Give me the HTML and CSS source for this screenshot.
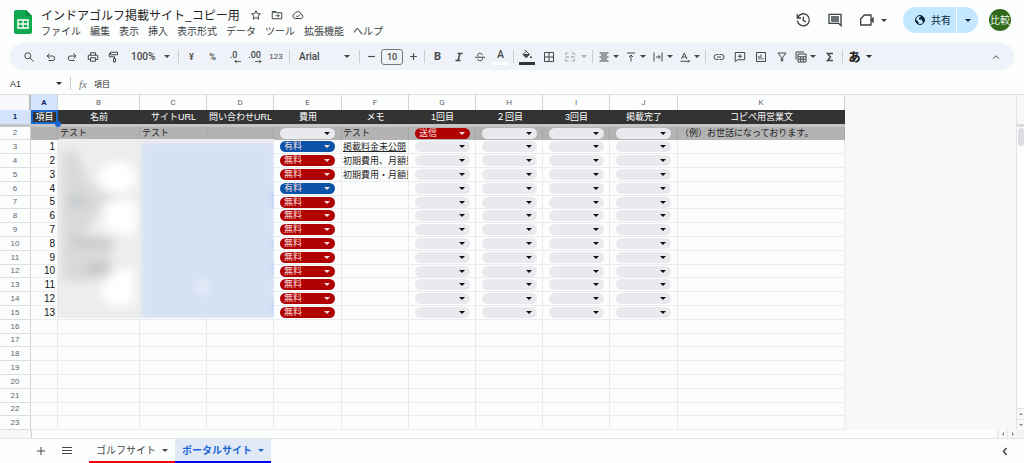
FILE: index.html
```
<!DOCTYPE html>
<html lang="ja">
<head>
<meta charset="utf-8">
<meta name="viewport" content="width=device-width, initial-scale=1">
<title>インドアゴルフ掲載サイト_コピー用</title>
<link rel="stylesheet" href="styles.css">
</head>
<body>
<header class="top">
  <svg class="logo" viewBox="0 0 18 24" aria-hidden="true">
    <path d="M2 0h10l6 6v16a2 2 0 0 1-2 2H2a2 2 0 0 1-2-2V2a2 2 0 0 1 2-2z" fill="#0fa94f"/>
    <path d="M12 0l6 6h-6z" fill="#0a8a40"/>
    <path d="M4 10h10v8H4zM4 14h10M9 10v8" fill="none" stroke="#fff" stroke-width="1.4"/>
  </svg>
  <div class="heading">
    <div class="title-row">
      <h1 class="title">インドアゴルフ掲載サイト_コピー用</h1>
      <button class="bare" aria-label="スター"><svg class="ic" viewBox="0 0 24 24"><path d="M12 3.5l2.6 5.7 6.2.7-4.6 4.2 1.3 6.1L12 17.100l-5.500 3.100 1.300-6.100-4.600-4.200 6.200-.7z" stroke-linejoin="round"/></svg></button>
      <button class="bare" aria-label="移動"><svg class="ic" viewBox="0 0 24 24"><path d="M2.500 5h7l2 2.500h10V19.500h-19zM3 6.500h8M9 13.500h7M13.500 10.500l3 3-3 3"/></svg></button>
      <button class="bare" aria-label="保存済み"><svg class="ic" viewBox="0 0 24 24"><path d="M6.500 19a5 5 0 0 1-.8-9.900 6.600 6.600 0 0 1 12.500 1.700A4.200 4.200 0 0 1 18.500 19zM8.500 13.500l2.500 2.500 4.500-4.500"/></svg></button>
    </div>
    <nav class="menus">
      <button>ファイル</button><button>編集</button><button>表示</button><button>挿入</button><button>表示形式</button><button>データ</button><button>ツール</button><button>拡張機能</button><button>ヘルプ</button>
    </nav>
  </div>
  <div class="actions">
    <button class="bare" aria-label="変更履歴"><svg class="ic big" viewBox="0 0 24 24"><path d="M4 8.500A9 9 0 1 1 3.500 13M3.500 3.500v5.500H9M12.500 7v5.500l4 2.500"/></svg></button>
    <button class="bare" aria-label="コメント"><svg class="ic big" viewBox="0 0 24 24"><path d="M3 3.500h18v17l-3.500-3.500H3zM6 7.500h12M6 10.500h12M6 13.500h12"/></svg></button>
    <button class="bare meet" aria-label="ビデオ会議"><svg class="ic big" viewBox="0 0 24 24"><path d="M8 4.500h10v15H2.500V10z" stroke-linejoin="round"/><path d="M18 11l4-4v10l-4-4z" fill="currentColor" stroke="none"/></svg><i class="tri"></i></button>
    <div class="share">
      <button class="share-main"><svg class="ic" viewBox="0 0 24 24"><circle cx="12" cy="12" r="9"/><path d="M3 10l6 6v5C5 20 2 15 3 10zM13 3v3l-3 2v3h5l2 4 2.500 2.500C23 12 21 5 13 3z" fill="currentColor" stroke="none"/></svg>共有</button>
      <button class="share-more" aria-label="共有オプション"><i class="tri"></i></button>
    </div>
    <button class="avatar">比較</button>
  </div>
</header>

<div class="toolbar" role="toolbar">
  <button class="tb find" aria-label="検索"><svg class="ic" viewBox="0 0 24 24"><circle cx="9.500" cy="9.500" r="6"/><path d="M14 14l7 7"/></svg></button>
  <button class="tb" aria-label="元に戻す"><svg class="ic" viewBox="0 0 24 24"><path d="M9 5L4 10l5 5M4.500 10H15a4.500 4.500 0 0 1 0 9H7"/></svg></button>
  <button class="tb" aria-label="やり直し"><svg class="ic" viewBox="0 0 24 24"><path d="M15 5l5 5-5 5M19.500 10H9a4.500 4.500 0 0 0 0 9h8"/></svg></button>
  <button class="tb" aria-label="印刷"><svg class="ic" viewBox="0 0 24 24"><path d="M7 8V3.500h10V8M7 17H2.500V8.500h19V17H17M7 13.500h10v7H7z"/></svg></button>
  <button class="tb" aria-label="書式を貼り付け"><svg class="ic" viewBox="0 0 24 24"><path d="M5 2.500h14v5H5zM5 5H2.500v6.500H13V15M11 15h4v7h-4z"/></svg></button>
  <button class="tb zoom">100%<i class="tri"></i></button>
  <span class="sep"></span>
  <button class="tb sm">¥</button>
  <button class="tb sm">%</button>
  <button class="tb sm" aria-label="小数点以下を減らす"><span class="dec">.0</span><svg class="arr" viewBox="0 0 8 5"><path d="M8 2.500H1M3 .5l-2 2 2 2"/></svg></button>
  <button class="tb sm" aria-label="小数点以下を増やす"><span class="dec">.00</span><svg class="arr" viewBox="0 0 8 5"><path d="M0 2.500h7M5 .5l2 2-2 2"/></svg></button>
  <button class="tb wide nums">123</button>
  <span class="sep"></span>
  <button class="tb font">Arial<i class="tri"></i></button>
  <span class="sep"></span>
  <button class="tb step" aria-label="縮小"><svg class="ic" viewBox="0 0 24 24"><path d="M3 12h18"/></svg></button>
  <input class="size" value="10" aria-label="フォントサイズ">
  <button class="tb step" aria-label="拡大"><svg class="ic" viewBox="0 0 24 24"><path d="M3 12h18M12 3v18"/></svg></button>
  <span class="sep"></span>
  <button class="tb bold">B</button>
  <button class="tb" aria-label="斜体"><svg class="ic heavy" viewBox="0 0 24 24"><path d="M9 5h10M5 19h10M14 5l-4 14"/></svg></button>
  <button class="tb" aria-label="取り消し線"><svg class="ic" viewBox="0 0 24 24"><path d="M2 12.500h20M17 8c-.5-4-9.500-5-10-.5 0 1.500 1 2.500 2.500 3M7 16c.5 4.500 10 4.500 10 0 0-.7-.2-1.200-.5-1.700"/></svg></button>
  <button class="tb ink white">A</button>
  <span class="sep"></span>
  <button class="tb wide ink dark" aria-label="塗りつぶし"><svg class="ic" viewBox="0 0 24 24"><path d="M8 2l9 9-6.500 6.500L4 11l6-6"/><path d="M5 11h11l-5.500 6z" fill="currentColor"/><path d="M20 13c3 4 2 5.500 0 5.500s-3-1.500 0-5.500z" fill="currentColor" stroke="none"/></svg></button>
  <button class="tb wide" aria-label="枠線"><svg class="ic" viewBox="0 0 24 24"><path d="M3 3h18v18H3zM12 3v18M3 12h18"/></svg></button>
  <button class="tb drop3 off" aria-label="セルを結合"><svg class="ic" viewBox="0 0 24 24"><path d="M3 8V4h6M15 4h6v4M3 16v4h6M15 20h6v-4M2 12h7M6.500 9.500L9 12l-2.500 2.500M22 12h-7M17.500 9.500L15 12l2.500 2.500"/></svg><i class="tri"></i></button>
  <span class="sep"></span>
  <button class="tb drop" aria-label="水平方向の配置"><svg class="ic" viewBox="0 0 24 24"><path d="M3 4h18M6 8h12M3 12h18M6 16h12M3 20h18"/></svg><i class="tri"></i></button>
  <button class="tb drop" aria-label="垂直方向の配置"><svg class="ic" viewBox="0 0 24 24"><path d="M4 4h16M12 21V8M8 12l4-4 4 4"/></svg><i class="tri"></i></button>
  <button class="tb drop" aria-label="折り返し"><svg class="ic" viewBox="0 0 24 24"><path d="M4 3v18M20 3v18M8 12h8M13 8.500l3.500 3.500-3.500 3.500"/></svg><i class="tri"></i></button>
  <button class="tb drop" aria-label="回転"><svg class="ic" viewBox="0 0 24 24"><path d="M5 16l5.500-12 5.500 12M7 12h7M3 20.500h18M18.500 18l2.500 2.500-2.500 2.500"/></svg><i class="tri"></i></button>
  <span class="sep"></span>
  <button class="tb" aria-label="リンク"><svg class="ic" viewBox="0 0 24 24"><path d="M11 7H7a5 5 0 0 0 0 10h4M13 7h4a5 5 0 0 1 0 10h-4M8 12h8"/></svg></button>
  <button class="tb" aria-label="コメントを挿入"><svg class="ic" viewBox="0 0 24 24"><path d="M2.500 3h19v14.500H6.500l-4 4zM12 6.500v8M8 10.500h8"/></svg></button>
  <button class="tb" aria-label="グラフ"><svg class="ic" viewBox="0 0 24 24"><path d="M3 3h18v18H3zM8 10v7M12 7v10M16 14v3"/></svg></button>
  <button class="tb" aria-label="フィルタ"><svg class="ic" viewBox="0 0 24 24"><path d="M4 4h16l-6.500 8.500V20h-3v-7.500z"/></svg></button>
  <button class="tb drop" aria-label="テーブル"><svg class="ic" viewBox="0 0 24 24"><path d="M2 17V2h16M6 6h16v16H6zM6 11.500h16M6 16.500h16M11.500 11.500V22M16.500 11.500V22"/></svg><i class="tri"></i></button>
  <button class="tb" aria-label="関数"><svg class="ic heavy" viewBox="0 0 24 24"><path d="M18 5H7l6 7-6 7h11"/></svg></button>
  <span class="sep"></span>
  <button class="tb drop3 kana">あ<i class="tri"></i></button>
  <button class="tb fold" aria-label="折りたたむ"><svg class="ic" viewBox="0 0 24 24"><path d="M6 15.500l6-6 6 6"/></svg></button>
</div>

<div class="formula">
  <input class="ref" value="A1" aria-label="名前ボックス">
  <button class="bare" aria-label="範囲"><i class="tri"></i></button>
  <span class="sep"></span>
  <span class="fx">fx</span>
  <input class="expr" value="項目" aria-label="数式">
</div>

<main class="main">
  <div class="sheet">
    <div class="table-wrap">
      <table class="grid" id="grid">
        <colgroup><col class="w31"><col class="w27"><col class="w82"><col class="w67"><col class="w67"><col class="w68"><col class="w67"><col class="w67"><col class="w67"><col class="w67"><col class="w68"><col class="w167"></colgroup>
        <thead></thead>
        <tbody></tbody>
      </table>
      <svg class="mask" viewBox="0 0 216 179" preserveAspectRatio="none" aria-hidden="true">
        <defs>
          <filter id="soft" x="-30%" y="-30%" width="160%" height="160%"><feGaussianBlur stdDeviation="5"/></filter>
          <filter id="edge" x="-10%" y="-10%" width="120%" height="120%"><feGaussianBlur stdDeviation="2"/></filter>
        </defs>
        <rect width="216" height="179" fill="#ededee"/>
        <g filter="url(#soft)">
          <path d="M4 12h14l14 34 26 14-22 16-8 22 26 8-4 30-14 6H4z" fill="#d9d9d9"/>
          <ellipse cx="20" cy="62" rx="9" ry="6" fill="#c2c8cc"/>
          <ellipse cx="34" cy="103" rx="24" ry="5" fill="#c9c9c8"/>
          <ellipse cx="40" cy="129" rx="13" ry="6" fill="#c6c6c5"/>
          <ellipse cx="60" cy="38" rx="19" ry="15" fill="#fff"/>
          <path d="M44 64l24-4 10 4v30l-10 2-26-8 8-10z" fill="#fff"/>
          <path d="M40 152l22-22 14 0v34l-20 4z" fill="#fff"/>
        </g>
        <path d="M84 4h132v175H84z" fill="#d6e1f4" filter="url(#edge)"/>
        <g filter="url(#edge)" fill="#c0d7f6">
          <ellipse cx="216" cy="60" rx="4" ry="9"/><ellipse cx="216" cy="106" rx="3" ry="6"/><ellipse cx="216" cy="130" rx="3" ry="8"/><ellipse cx="216" cy="168" rx="3" ry="9"/>
          <ellipse cx="144" cy="148" rx="8" ry="9" fill="#e0e8f7"/>
        </g>
      </svg>
    </div>
    <div class="blank"></div>
    <div class="vbar"><div class="vtop"></div><div class="thumb"></div><button class="up" aria-label="上へ"></button><button class="down" aria-label="下へ"></button></div>
  </div>
  <div class="hbar"><button class="left" aria-label="左へ"></button><button class="right" aria-label="右へ"></button><span class="corner"></span></div>
</main>

<footer class="tabs">
  <button class="bare plus" aria-label="シートを追加"><svg class="ic" viewBox="0 0 24 24"><path d="M4 12h16M12 4v16"/></svg></button>
  <button class="bare list" aria-label="すべてのシート"><svg class="ic" viewBox="0 0 24 24"><path d="M2 5h20M2 11h20M2 17h20"/></svg></button>
  <button class="tab red">ゴルフサイト<i class="tri"></i></button>
  <button class="tab active">ポータルサイト<i class="tri"></i></button>
  <button class="bare side" aria-label="サイドパネル"><svg class="ic heavy" viewBox="0 0 24 24"><path d="M15 6l-6 7 6 7"/></svg></button>
</footer>
<script src="grid.js"></script>
</body>
</html>
```

FILE: styles.css
```
* { box-sizing: border-box; }
body {
  margin: 0; min-height: 100vh; display: flex; flex-direction: column;
  background: #fcfefe; color: #2b2d30; overflow: hidden;
  font: 9px/12px "Liberation Sans", "Noto Sans CJK JP", sans-serif;
}
button, input, select { font: inherit; color: inherit; margin: 0; padding: 0; border: 0; background: none; border-radius: 0; outline: 0; }
button { display: flex; align-items: center; justify-content: center; cursor: pointer; white-space: nowrap; }
.ic { width: 12px; height: 12px; flex: none; fill: none; stroke: currentColor; stroke-width: 2; }
.ic.big { width: 16px; height: 16px; }
.ic.heavy { stroke-width: 3; }
.tri { flex: none; border: 3px solid transparent; border-top-color: currentColor; border-bottom: 0; }

.top { display: flex; padding: 7px 13px 4px 14px; color: #3c4043; }
.logo { width: 18px; height: 24px; margin-top: 3px; }
.heading { margin-left: 9px; }
.title-row { display: flex; align-items: center; height: 16px; }
.title { margin: 0 10px 0 0; font: 400 12px/16px "Noto Sans CJK JP", sans-serif; color: #1f2123; }
.title-row .bare { margin-right: 9px; }
.menus { display: flex; gap: 9px; height: 16px; font: 10px/16px "Noto Sans CJK JP", sans-serif; }
.actions { display: flex; align-items: center; height: 26px; margin-left: auto; gap: 16px; }
.meet { gap: 6px; }
.share { display: flex; height: 26px; border-radius: 13px; overflow: hidden; background: #c2e7ff; color: #0b2536; }
.share-main { width: 53px; padding-left: 6px; gap: 5px; font: 10px/14px "Noto Sans CJK JP", sans-serif; }
.share-more { width: 22px; border-left: 1px solid #fff; }
.avatar { width: 22px; height: 22px; margin-left: -5px; border-radius: 11px; background: #2f6b1a; color: #f2f6ef; font: 10px/14px "Noto Sans CJK JP", sans-serif; }

.toolbar { display: flex; align-items: center; height: 27px; margin: 0 10px; padding: 0 8px 0 7px; border-radius: 14px; background: #eff2f8; color: #444746; }
.tb { width: 21px; height: 20px; flex: none; }
.find { width: 23px; }
.wide { width: 22px; }
.zoom { width: 52px; padding: 0 6px 0 7px; justify-content: space-between; font: 500 10px/14px Roboto, sans-serif; }
.sm { position: relative; font: 500 9px/12px Roboto, sans-serif; }
.nums { font: 500 8px/12px "Liberation Sans", sans-serif; }
.dec { padding-bottom: 4px; }
.arr { position: absolute; right: 3px; bottom: 3px; width: 7px; height: 5px; fill: none; stroke: currentColor; }
.font { width: 65px; padding: 0 7px; justify-content: space-between; font: 500 10px/14px Roboto, sans-serif; }
.step { width: 18px; }
.step .ic { width: 9px; height: 9px; stroke-width: 3; }
.size { width: 22px; height: 16px; margin: 0 1px; border: 1px solid #747775; border-radius: 3px; text-align: center; font: 500 9px/14px Roboto, sans-serif; }
.bold { font: 700 11px/14px Roboto, sans-serif; }
.ink { height: 16px; flex-direction: column; justify-content: space-between; font: 500 10px/12px Roboto, sans-serif; }
.ink::after { content: ""; width: 16px; height: 3px; background: #fff; }
.ink.dark::after { background: #333; }
.drop, .drop3 { gap: 3px; }
.drop { width: 27px; }
.drop3 { width: 30px; gap: 5px; }
.off { color: #a9abad; }
.kana { font: 900 12px/14px "Noto Sans CJK JP", sans-serif; color: #222; }
.fold { margin-left: auto; }
.sep { width: 1px; height: 13px; margin: 0 2px; flex: none; background: #c9ccd1; }

.formula { display: flex; align-items: center; height: 24px; padding: 3px 0 0 10px; }
.ref { width: 46px; }
.formula .sep { margin: 0 8px; }
.fx { width: 15px; font: italic 11px/14px "Liberation Serif", serif; color: #777; }
.expr { flex: 1; font: 8px/14px "Noto Sans CJK JP", sans-serif; }

.main { flex: 1; display: flex; flex-direction: column; border-top: 1px solid #dcdee0; }
.sheet { flex: 1; display: flex; }
.table-wrap { position: relative; flex: none; }
.grid { table-layout: fixed; width: 845px; border-collapse: separate; border-spacing: 0; }
.w31 { width: 31px; } .w27 { width: 27px; } .w67 { width: 67px; } .w68 { width: 68px; } .w82 { width: 82px; } .w167 { width: 167px; }
.grid th, .grid td { padding: 0; overflow: hidden; white-space: nowrap; border: solid #e9ebec; border-width: 0 1px 1px 0; font-weight: 400; line-height: 12px; }
.grid thead th { height: 15px; border-bottom: 0; border-color: #d0d2d4; color: #5f6368; font: 8px/12px Roboto, sans-serif; }
.grid thead .on { background: #d3e3fd; color: #0b2b5c; font-weight: 700; }
.grid thead .all { background: #f7f9fc; border-right: 2px solid #b8babc; }
.grid tbody th { border-color: #cfd1d3 #cfd1d3 #dcdee0; color: #5f6368; font: 8px/12px "Liberation Sans", sans-serif; text-align: center; }
.grid tr { height: 14px; }
.grid .short { height: 13px; }
.grid .cut td { height: 3px; border: 0; background: #c4c5c6; line-height: 0; }
.grid .cut { height: 3px; }
.grid .head td { border: 0; background: #333; color: #fff; text-align: center; }
.grid tbody .head th { background: #d3e3fd; color: #0b2b5c; font-weight: 700; border-bottom: 0; }
.grid .head .cell { position: relative; overflow: visible; outline: 2px solid #1967d2; outline-offset: -2px; }
.cell::after { content: ""; position: absolute; z-index: 2; right: -3px; bottom: -3px; width: 6px; height: 6px; border-radius: 3px; background: #1967d2; }
.grid .sample td { background: #b3b3b3; border-color: #a6a6a6; border-bottom-color: #b3b3b3; }
.grid td.num { text-align: right; padding-right: 2px; font-size: 10px; color: #111; }
.grid td.txt { padding-left: 2px; color: #222; }
.grid td.memo { padding-left: 1px; }
.link { text-decoration: underline; }
.chip { position: relative; display: block; width: 55px; height: 11px; margin-left: 6px; color: #111; }
.chip select { display: block; appearance: none; width: 100%; height: 11px; padding: 0 12px 0 4px; border-radius: 6px; background: #e8eaed; line-height: 11px; }
.chip::after { content: ""; position: absolute; right: 5px; top: 4px; border: 3px solid transparent; border-top-color: currentColor; border-bottom: 0; pointer-events: none; }
.chip.red, .chip.blue { color: #f7dedc; }
.chip.red select { background: #b10202; }
.chip.blue select { background: #0a53a8; }
.mask { position: absolute; left: 58px; top: 44px; width: 216px; height: 179px; }
.blank { flex: 1; background: #f8f8f8; }
.vbar { width: 8px; display: flex; flex-direction: column; align-items: center; border-left: 1px solid #e1e3e5; }
.vtop { width: 100%; height: 32px; border-bottom: 3px solid #d9dbdd; background: #f8f8f8; }
.thumb { width: 6px; height: 18px; margin: 1px 0 auto; border-radius: 3px; background: #dadce0; }
.vbar button { width: 100%; height: 11px; border-top: 1px solid #e1e3e5; background: #f8f8f8; color: #888; }
.up::after, .down::after, .left::after, .right::after { content: ""; border: 2px solid transparent; }
.up::after { border-bottom-color: #888; border-top: 0; }
.down::after { border-top-color: #888; border-bottom: 0; }
.left::after { border-right-color: #888; border-left: 0; }
.right::after { border-left-color: #888; border-right: 0; }
.hbar { display: flex; justify-content: flex-end; height: 9px; border-bottom: 1px solid #e1e3e5; }
.hbar::before { content: ""; width: 31px; margin-right: auto; background: #f8f8f8; border-right: 1px solid #cfd1d3; }
.hbar button { width: 10px; border-left: 1px solid #e1e3e5; background: #f8f8f8; }
.corner { width: 7px; background: #f1f2f3; }

.tabs { display: flex; align-items: center; height: 24px; padding-left: 35px; color: #444746; }
.tabs .bare { width: 12px; }
.tabs .plus { margin-right: 14px; }
.tabs .list { margin-right: 16px; }
.tab { height: 24px; padding: 0 7px; gap: 6px; border-bottom: 2px solid #00f; font: 10px/14px "Noto Sans CJK JP", sans-serif; }
.tab.red { border-color: #f00; }
.tab.active { background: #e1e9f7; color: #1967d2; font-weight: 700; }
.tabs .side { margin: 0 13px 0 auto; }
```

FILE: grid.js
```
const letters = ['A', 'B', 'C', 'D', 'E', 'F', 'G', 'H', 'I', 'J', 'K'];
const headings = ['項目', '名前', 'サイトURL', '問い合わせURL', '費用', 'メモ', '1回目', '２回目', '3回目', '掲載完了', 'コピペ用営業文'];
const fees = ['有料', '無料', '無料', '有料', '無料', '無料', '無料', '無料', '無料', '無料', '無料', '無料', '無料'];
const memos = ['<span class="link">掲載料金未公開</span>', '初期費用、月額費', '初期費用・月額費'];

function chip(value, label) {
  const tone = value === '有料' ? ' blue' : value ? ' red' : '';
  return `<td><label class="chip${tone}"><select aria-label="${label}"><option>${value}</option></select></label></td>`;
}
const text = (value, extra = '') => `<td class="txt${extra}">${value}</td>`;

document.querySelector('#grid thead').innerHTML =
  '<tr><th class="all"></th>' + letters.map((l, i) => `<th${i ? '' : ' class="on"'}>${l}</th>`).join('') + '</tr>';

let rows = '<tr class="head"><th>1</th>' +
  headings.map((h, i) => `<td${i ? '' : ' class="cell"'}>${h}</td>`).join('') + '</tr>';
rows += '<tr class="cut"><td colspan="12"></td></tr>';
rows += '<tr class="sample short"><th>2</th><td></td>' + text('テスト') + text('テスト') + '<td></td>' +
  chip('', '費用') + text('テスト', ' memo') + chip('送信', '1回目') + chip('', '２回目') + chip('', '3回目') + chip('', '掲載完了') +
  text('（例）お世話になっております。') + '</tr>';

for (let n = 1; n <= 21; n++) {
  rows += `<tr${n % 5 ? '' : ' class="short"'}><th>${n + 2}</th>`;
  if (n <= 13) {
    rows += `<td class="num">${n}</td><td></td><td></td><td></td>` + chip(fees[n - 1], '費用') + text(memos[n - 1] || '', ' memo') +
      headings.slice(6, 10).map(h => chip('', h)).join('') + '<td></td>';
  } else {
    rows += '<td></td>'.repeat(11);
  }
  rows += '</tr>';
}
document.querySelector('#grid tbody').innerHTML = rows;
```
